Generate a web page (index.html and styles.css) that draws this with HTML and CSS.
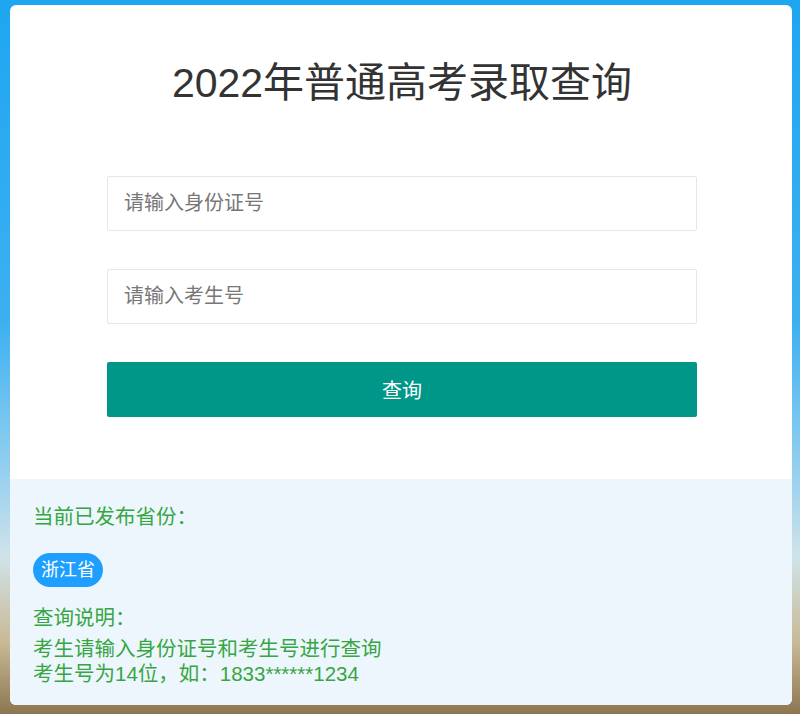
FILE: index.html
```html
<!DOCTYPE html>
<html lang="zh-CN">
<head>
  <meta charset="UTF-8">
  <title>2022年普通高考录取查询</title>
  <link rel="stylesheet" href="styles.css">
</head>
<body>

  <div class="card">
    <form class="query-form" id="queryForm">
      <h1>2022年普通高考录取查询</h1>
      <input type="text" id="idcard" placeholder="请输入身份证号">
      <input type="text" id="examNo" placeholder="请输入考生号">
      <button type="submit">查询</button>
    </form>

    <div class="notice">
      <p class="notice-title">当前已发布省份：</p>
      <div class="provinces">
        <span class="province">浙江省</span>
      </div>
      <p class="notice-title">查询说明：</p>
      <p class="notice-text">考生请输入身份证号和考生号进行查询<br>考生号为14位，如：1833******1234</p>
    </div>
  </div>

</body>
</html>
```

FILE: styles.css
```css
html, body {
  height: 100%;
}

body {
  margin: 0;
  padding: 5px 8px 9px 10px;
  box-sizing: border-box;
  font-family: 'Liberation Sans', 'Noto Sans CJK SC', sans-serif;
  background: linear-gradient(to bottom, #1ea6f1 0%, #3cb0f1 45%, #9fd3ef 68%, #cfe3e8 78%, #c9b996 90%, #8c7650 100%);
}

.card {
  height: 100%;
  display: flex;
  flex-direction: column;
  background-color: #fff;
  border-radius: 6px;
  overflow: hidden;
}

.query-form {
  display: flex;
  flex-direction: column;
  padding: 50px 95px 62px 97px;
}

.query-form h1 {
  margin: 0 0 65px;
  font-size: 41px;
  line-height: 56px;
  font-weight: normal;
  text-align: center;
  color: #333;
}

.query-form input {
  height: 55px;
  margin-bottom: 38px;
  padding: 0 16px;
  box-sizing: border-box;
  border: 1px solid #e6e6e6;
  border-radius: 2px;
  font-family: inherit;
  font-size: 20px;
  color: #333;
  outline: none;
}

.query-form input::placeholder {
  color: #777;
}

.query-form button {
  height: 55px;
  border: none;
  border-radius: 2px;
  background-color: #009688;
  color: #fff;
  font-family: inherit;
  font-size: 20px;
  cursor: pointer;
}

.notice {
  flex: 1;
  background-color: #eef6fd;
  padding: 25px 23px;
  color: #36a643;
  font-size: 20.5px;
}

.notice p {
  margin: 0;
  line-height: 26px;
}

.provinces {
  margin: 23px 0 18px;
}

.province {
  display: inline-block;
  height: 34px;
  line-height: 34px;
  padding: 0 8px;
  border-radius: 17px;
  background-color: #1e9fff;
  color: #fff;
  font-size: 18px;
}

.notice-text {
  margin-top: 5px !important;
  line-height: 25px !important;
}
```
